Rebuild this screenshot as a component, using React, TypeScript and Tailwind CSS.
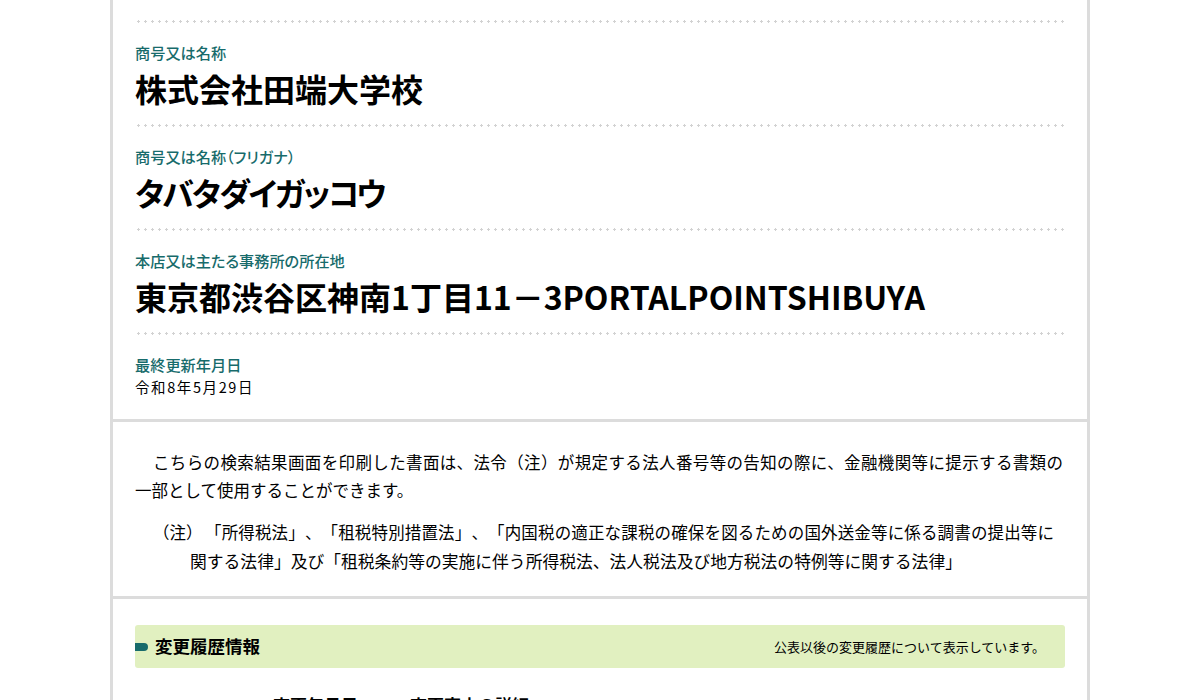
import React from 'react';

const font = { fontFamily: '"Noto Sans CJK JP", "Noto Sans", sans-serif' };

interface InfoRow {
  label: string;
  value: string;
  small?: boolean;
  kana?: boolean;
}

const rows: InfoRow[] = [
  { label: '商号又は名称', value: '株式会社田端大学校' },
  { label: '商号又は名称（フリガナ）', value: 'タバタダイガッコウ', kana: true },
  { label: '本店又は主たる事務所の所在地', value: '東京都渋谷区神南1丁目11－3PORTALPOINTSHIBUYA' },
  { label: '最終更新年月日', value: '令和8年5月29日', small: true },
];

function Dots() {
  return (
    <div className="h-[3px] w-full bg-[image:radial-gradient(circle,#d2d2d2_1px,transparent_1.4px)] bg-[length:7px_3px]" />
  );
}

// 1行だけを両端揃えにする
const justifyLine = "text-justify [text-align-last:justify] whitespace-nowrap";

export default function App() {
  return (
    <div className="min-h-[700px] bg-white text-black [text-spacing-trim:space-all]" style={font}>
      <div className="mx-auto w-[980px] border-x-[3px] border-[#dcdcdc]">
        {/* 基本情報 */}
        <section className="px-[22px] pt-[20px] pb-[20px]">
          {rows.map((row) => (
            <div key={row.label}>
              <Dots />
              <div className={row.small ? 'pt-[18px]' : 'pt-[18px] pb-[16px]'}>
                <div className="text-[15.2px] leading-[22px] font-medium text-[#176b6b] [font-feature-settings:'palt']">
                  {row.label}
                </div>
                {row.small ? (
                  <div className="text-[14.5px] leading-[24px] tracking-[1.6px]">{row.value}</div>
                ) : (
                  <div
                    className={
                      row.kana
                        ? "mt-[5px] text-[32px] leading-[40px] font-bold whitespace-nowrap tracking-[-2px] [font-feature-settings:'palt']"
                        : 'mt-[5px] text-[32px] leading-[40px] font-bold whitespace-nowrap'
                    }
                  >
                    {row.value}
                  </div>
                )}
              </div>
            </div>
          ))}
        </section>

        {/* 注意書き */}
        <section className="border-t-[3px] border-[#dcdcdc] px-[22px] pt-[26px] pb-[20px]">
          <div className="text-[16.5px] leading-[28px]">
            <div className={`pl-[18px] pr-[2px] ${justifyLine}`}>
              こちらの検索結果画面を印刷した書面は、法令（注）が規定する法人番号等の告知の際に、金融機関等に提示する書類の
            </div>
            <div className="whitespace-nowrap">一部として使用することができます。</div>
          </div>
          <div className="mt-[14px] text-[16.5px] leading-[29px]">
            <div className="flex pl-[18px]">
              <span className="w-[52px] shrink-0">（注）</span>
              <span className={`block w-[849px] ${justifyLine}`}>
                「所得税法」、「租税特別措置法」、「内国税の適正な課税の確保を図るための国外送金等に係る調書の提出等に
              </span>
            </div>
            <div className="pl-[55px] text-[16.8px] whitespace-nowrap">
              関する法律」及び「租税条約等の実施に伴う所得税法、法人税法及び地方税法の特例等に関する法律」
            </div>
          </div>
        </section>

        {/* 変更履歴情報 */}
        <section className="border-t-[3px] border-[#dcdcdc] px-[22px] pt-[26px] pb-[40px]">
          <div className="flex h-[43px] items-center justify-between rounded-[3px] bg-[#e1f0c0] pr-[20px]">
            <div className="flex items-center">
              <span className="h-[8px] w-[13px] rounded-r-full bg-[#176b6b]" />
              <h2 className="ml-[7px] text-[17.5px] font-bold">変更履歴情報</h2>
            </div>
            <span className="text-[13px]">公表以後の変更履歴について表示しています。</span>
          </div>
          <div className="mt-[24px] flex text-[17px] font-bold">
            <span className="ml-[138px]">変更年月日</span>
            <span className="ml-[52px]">変更事由の詳細</span>
          </div>
        </section>
      </div>
    </div>
  );
}
